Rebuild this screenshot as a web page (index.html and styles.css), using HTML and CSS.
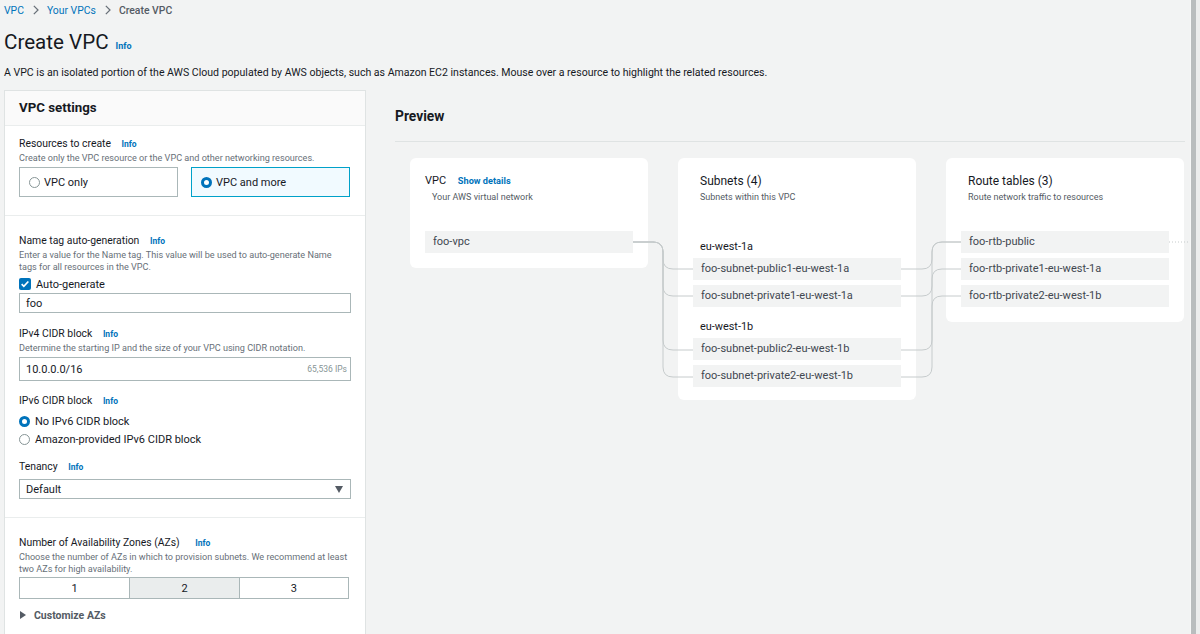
FILE: index.html
```html
<!DOCTYPE html>
<html lang="en">
<head>
  <meta charset="UTF-8">
  <title>Create VPC</title>
  <link rel="stylesheet" href="styles.css">
</head>
<body>
<div class="page">
  <div class="main">
    <nav class="crumbs">
      <a href="#">VPC</a>
      <svg class="chev" viewBox="0 0 8 12" width="8" height="12"><path d="M2 1l5 5-5 5" fill="none" stroke="#687078" stroke-width="1.5"/></svg>
      <a href="#">Your VPCs</a>
      <svg class="chev" viewBox="0 0 8 12" width="8" height="12"><path d="M2 1l5 5-5 5" fill="none" stroke="#687078" stroke-width="1.5"/></svg>
      <span class="current">Create VPC</span>
    </nav>
    <h1 class="title">Create VPC <a class="info" href="#">Info</a></h1>
    <p class="intro">A VPC is an isolated portion of the AWS Cloud populated by AWS objects, such as Amazon EC2 instances. Mouse over a resource to highlight the related resources.</p>

    <div class="layout">
      <section class="settings">
        <div class="settings-head">VPC settings</div>

        <div class="block block-first">
          <div class="label">Resources to create <a class="info" href="#">Info</a></div>
          <div class="help">Create only the VPC resource or the VPC and other networking resources.</div>
          <div class="tiles">
            <div class="tile"><span class="radio"></span>VPC only</div>
            <div class="tile selected"><span class="radio on"></span>VPC and more</div>
          </div>
        </div>

        <div class="block">
          <div class="label">Name tag auto-generation <a class="info" href="#">Info</a></div>
          <div class="help">Enter a value for the Name tag. This value will be used to auto-generate Name tags for all resources in the VPC.</div>
          <div class="check-row">
            <span class="checkbox"><svg viewBox="0 0 12 12" width="10" height="10"><path d="M2 6.2l2.6 2.6L10 3" fill="none" stroke="#fff" stroke-width="2"/></svg></span>
            Auto-generate
          </div>
          <div class="input input-short">foo</div>

          <div class="label gap-13">IPv4 CIDR block <a class="info" href="#">Info</a></div>
          <div class="help">Determine the starting IP and the size of your VPC using CIDR notation.</div>
          <div class="input input-tall"><span>10.0.0.0/16</span><span class="hint">65,536 IPs</span></div>

          <div class="label gap-12">IPv6 CIDR block <a class="info" href="#">Info</a></div>
          <div class="radio-list">
            <div class="radio-row"><span class="radio on"></span>No IPv6 CIDR block</div>
            <div class="radio-row"><span class="radio"></span>Amazon-provided IPv6 CIDR block</div>
          </div>

          <div class="label gap-11">Tenancy <a class="info" href="#">Info</a></div>
          <div class="input select"><span>Default</span><span class="caret"></span></div>
        </div>

        <div class="block">
          <div class="label">Number of Availability Zones (AZs) <a class="info info-wide" href="#">Info</a></div>
          <div class="help">Choose the number of AZs in which to provision subnets. We recommend at least two AZs for high availability.</div>
          <div class="segments">
            <div class="seg">1</div>
            <div class="seg active">2</div>
            <div class="seg">3</div>
          </div>
          <div class="expand"><span class="tri"></span>Customize AZs</div>
        </div>
      </section>

      <section class="preview">
        <h2>Preview</h2>
        <div class="diagram">
          <div class="card">
            <div class="card-title vpc-title">VPC <a class="details" href="#">Show details</a></div>
            <div class="card-sub vpc-sub">Your AWS virtual network</div>
            <div class="items first">
              <div class="item">foo-vpc</div>
            </div>
          </div>

          <div class="card">
            <div class="card-title">Subnets (4)</div>
            <div class="card-sub">Subnets within this VPC</div>
            <div class="zone zone-first">eu-west-1a</div>
            <div class="items">
              <div class="item">foo-subnet-public1-eu-west-1a</div>
              <div class="item">foo-subnet-private1-eu-west-1a</div>
            </div>
            <div class="zone">eu-west-1b</div>
            <div class="items">
              <div class="item">foo-subnet-public2-eu-west-1b</div>
              <div class="item">foo-subnet-private2-eu-west-1b</div>
            </div>
          </div>

          <div class="card">
            <div class="card-title">Route tables (3)</div>
            <div class="card-sub">Route network traffic to resources</div>
            <div class="items first">
              <div class="item">foo-rtb-public</div>
              <div class="item">foo-rtb-private1-eu-west-1a</div>
              <div class="item">foo-rtb-private2-eu-west-1b</div>
            </div>
          </div>

          <!-- connectors between the preview cards -->
          <svg class="links" viewBox="0 0 774 244" width="774" height="244">
            <g fill="none" stroke="#c6cbcc" stroke-width="1">
              <path d="M223 84H243Q253 84 253 94V101Q253 111 263 111H283"/>
              <path d="M223 84H243Q253 84 253 94V128Q253 138 263 138H283"/>
              <path d="M223 84H243Q253 84 253 94V182Q253 192 263 192H283"/>
              <path d="M223 84H243Q253 84 253 94V209Q253 219 263 219H283"/>
              <path d="M491 111H512Q522 111 522 101V94Q522 84 532 84H551"/>
              <path d="M491 138H512Q522 138 522 128V121Q522 111 532 111H551"/>
              <path d="M491 192H512Q522 192 522 182V94Q522 84 532 84H551"/>
              <path d="M491 219H512Q522 219 522 209V148Q522 138 532 138H551"/>
              <path d="M759 84H780" stroke-dasharray="1 2"/>
            </g>
          </svg>
        </div>
      </section>
    </div>
  </div>
  <div class="edge"></div>
</div>
</body>
</html>
```
FILE: styles.css
```css
body {
  margin: 0;
  font-family: 'Roboto', 'Liberation Sans', sans-serif;
  color: #16191f;
  background-color: #f2f3f3;
}

a {
  text-decoration: none;
  color: #0073bb;
}

.page {
  display: flex;
  width: 1200px;
  height: 634px;
  overflow: hidden;
}

.main {
  flex: 1;
  padding-left: 4px;
}

.edge {
  width: 10px;
  background: linear-gradient(to right, #f7f8f8 0, #f7f8f8 1px, #b9bdbe 1px, #b9bdbe 6px, #eceded 6px);
}

/* header */

.crumbs {
  display: flex;
  align-items: center;
  gap: 8px;
  height: 20px;
  font-size: 10.4px;
}

.crumbs .chev {
  width: 7px;
  height: 10px;
}

.crumbs .current {
  color: #545b64;
  font-weight: 500;
}

.title {
  display: flex;
  align-items: baseline;
  height: 28px;
  margin: 8px 0 0;
  font-size: 20.6px;
  font-weight: 400;
  line-height: 28px;
}

.info {
  font-size: 8.5px;
  font-weight: 700;
  margin-left: 5px;
}

.title .info {
  margin-left: 7px;
  font-size: 9px;
}

.intro {
  margin: 9px 0 0;
  font-size: 10.55px;
  line-height: 16px;
}

.layout {
  display: flex;
  margin-top: 9px;
  align-items: flex-start;
}

/* left column */

.settings {
  width: 362px;
  box-sizing: border-box;
  background-color: #fff;
  border: 1px solid #dfe3e3;
  border-bottom: none;
  height: 560px;
}

.settings-head {
  height: 34px;
  line-height: 34px;
  padding-left: 14px;
  font-size: 13.3px;
  font-weight: 700;
  background-color: #fafafa;
  border-bottom: 1px solid #eaeded;
}

.block {
  padding: 17px 14px 18px;
  border-bottom: 1px solid #eaeded;
}

.block-first {
  padding-top: 10px;
}

.block:last-child {
  border-bottom: none;
}

.label {
  font-size: 10.4px;
  line-height: 16px;
}

.label .info {
  margin-left: 8px;
}

.label .info-wide {
  margin-left: 13px;
}

.gap-13 { margin-top: 13px; }
.gap-12 { margin-top: 12px; }
.gap-11 { margin-top: 11px; }

.help {
  font-size: 9.1px;
  line-height: 12px;
  color: #687078;
}

.tiles {
  display: grid;
  grid-template-columns: 159px 159px;
  gap: 13px;
  margin-top: 3px;
}

.tile {
  display: flex;
  align-items: center;
  height: 30px;
  box-sizing: border-box;
  padding-left: 9px;
  border: 1px solid #aab7b8;
  font-size: 11px;
}

.tile .radio {
  margin-right: 4px;
}

.tile.selected {
  background-color: #f1faff;
  border-color: #00a1c9;
}

.radio {
  display: inline-block;
  width: 11px;
  height: 11px;
  box-sizing: border-box;
  border: 1px solid #879596;
  border-radius: 50%;
  background-color: #fff;
  margin-right: 6px;
}

.radio.on {
  border: 3.5px solid #0073bb;
}

.check-row {
  display: flex;
  align-items: center;
  height: 16px;
  margin-top: 3px;
  font-size: 11px;
}

.checkbox {
  display: inline-flex;
  align-items: center;
  justify-content: center;
  width: 12px;
  height: 12px;
  margin-right: 5px;
  background-color: #0073bb;
  border-radius: 2px;
}

.input {
  display: flex;
  align-items: center;
  justify-content: space-between;
  box-sizing: border-box;
  width: 332px;
  height: 20px;
  margin-top: 1px;
  padding: 0 6px;
  border: 1px solid #aab7b8;
  font-size: 11px;
}

.input-tall {
  height: 24px;
  margin-top: 3px;
  padding-right: 3px;
}

.hint {
  font-size: 8.5px;
  color: #879596;
}

.radio-list {
  margin-top: 3px;
}

.radio-row {
  display: flex;
  align-items: center;
  height: 18px;
  font-size: 11px;
}

.radio-row .radio {
  margin-right: 5px;
}

.select {
  margin-top: 4px;
  padding-right: 7px;
}

.caret {
  width: 0;
  height: 0;
  border-left: 4.5px solid transparent;
  border-right: 4.5px solid transparent;
  border-top: 7px solid #545b64;
}

.segments {
  display: grid;
  grid-template-columns: 1fr 1fr 1fr;
  width: 330px;
  height: 22px;
  margin-top: 2px;
  box-sizing: border-box;
  border: 1px solid #aab7b8;
}

.seg {
  display: flex;
  align-items: center;
  justify-content: center;
  font-size: 11px;
  border-left: 1px solid #aab7b8;
}

.seg:first-child {
  border-left: none;
}

.seg.active {
  background-color: #eaeded;
}

.expand {
  display: flex;
  align-items: center;
  height: 16px;
  margin-top: 8px;
  font-size: 10.5px;
  font-weight: 700;
  color: #545b64;
}

.tri {
  width: 0;
  height: 0;
  margin: 0 8px 0 1px;
  border-top: 4px solid transparent;
  border-bottom: 4px solid transparent;
  border-left: 6px solid #545b64;
}

/* preview */

.preview {
  flex: 1;
  padding: 16px 5px 0 29px;
}

.preview h2 {
  margin: 0;
  padding-bottom: 15px;
  font-size: 13.8px;
  line-height: 20px;
  font-weight: 700;
  border-bottom: 1px solid #dfe3e3;
}

.diagram {
  position: relative;
  display: flex;
  align-items: flex-start;
  gap: 30px;
  margin: 16px 0 0 15px;
}

.card {
  width: 238px;
  box-sizing: border-box;
  padding: 15px 15px 13px;
  background-color: #fff;
  border-radius: 6px;
}

.card-title {
  padding-left: 7px;
  font-size: 12px;
  line-height: 16px;
}

.card-sub {
  margin-top: 2px;
  padding-left: 7px;
  font-size: 9px;
  line-height: 12px;
  color: #545b64;
}

.vpc-title {
  padding-left: 0;
  font-size: 11px;
}

.vpc-sub {
  padding-left: 7px;
}

.details {
  margin-left: 9px;
  font-size: 9.2px;
  font-weight: 700;
}

.zone {
  margin-top: 12px;
  padding-left: 7px;
  font-size: 10.9px;
  line-height: 16px;
}

.zone-first {
  margin-top: 36px;
}

.items {
  display: flex;
  flex-direction: column;
  gap: 5px;
  margin-top: 3px;
}

.items.first {
  margin-top: 28px;
  margin-bottom: 2px;
}

.item {
  height: 22px;
  line-height: 22px;
  padding-left: 8px;
  background-color: #f2f3f3;
  font-size: 11px;
  color: #414750;
}

.links {
  position: absolute;
  left: 0;
  top: 0;
  overflow: visible;
  pointer-events: none;
}
```
